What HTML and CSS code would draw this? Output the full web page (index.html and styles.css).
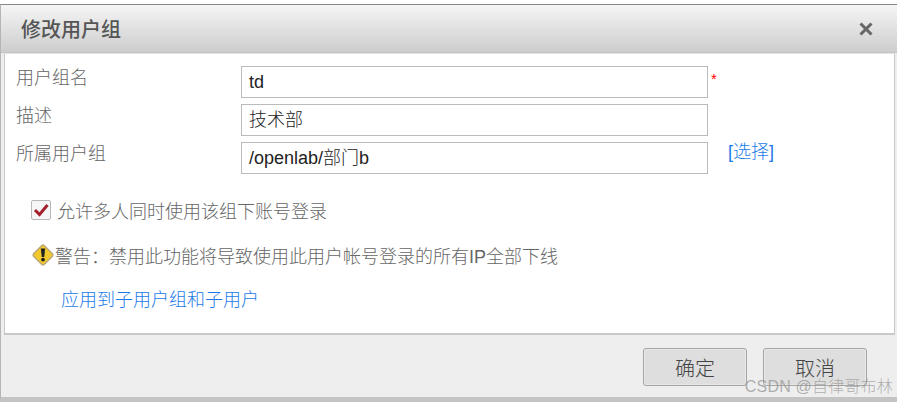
FILE: index.html
```html
<!DOCTYPE html>
<html lang="zh">
<head>
<meta charset="utf-8">
<title>修改用户组</title>
<link rel="stylesheet" href="styles.css">
</head>
<body>
<div class="dialog">
  <header class="titlebar">
    <h1 class="title">修改用户组</h1>
    <svg class="close" width="14" height="14" viewBox="0 0 14 14"><path d="M1.5 1.5L12.5 12.5M12.5 1.5L1.5 12.5" stroke="#666" stroke-width="3"/></svg>
  </header>
  <main class="content">
    <div class="form">
      <label class="label">用户组名</label>
      <div class="field"><div class="input">td</div><span class="req">*</span></div>
      <label class="label">描述</label>
      <div class="field"><div class="input">技术部</div></div>
      <label class="label">所属用户组</label>
      <div class="field"><div class="input">/openlab/部门b</div><a class="link pick">[选择]</a></div>
    </div>
    <div class="option">
      <span class="check"><svg width="16" height="14" viewBox="0 0 16 14"><path d="M2 7L6.5 11.5L14.5 2" fill="none" stroke="#a3202c" stroke-width="3"/></svg></span>
      <span class="text">允许多人同时使用该组下账号登录</span>
    </div>
    <div class="warning">
      <svg class="warn" width="22" height="22" viewBox="0 0 22 22">
        <rect x="3.5" y="3.5" width="15" height="15" rx="2" transform="rotate(45 11 11)" fill="#f2c92c" stroke="#b9a77a" stroke-width="1.4"/>
        <path d="M8.8 4.5h4.4l-1 8.5h-2.4z" fill="#222"/>
        <circle cx="11" cy="15.6" r="1.9" fill="#222"/>
      </svg>
      <span class="text">警告：禁用此功能将导致使用此用户帐号登录的所有IP全部下线</span>
    </div>
    <a class="link apply">应用到子用户组和子用户</a>
  </main>
  <footer class="footer">
    <button class="btn">确定</button>
    <button class="btn">取消</button>
  </footer>
  <span class="watermark">CSDN @自律哥布林</span>
</div>
</body>
</html>
```
FILE: styles.css
```css
* { box-sizing: border-box; }
html, body { margin: 0; padding: 0; }
body {
  width: 897px;
  height: 402px;
  overflow: hidden;
  background: #fff;
  font-family: "Liberation Sans", "Noto Sans CJK SC", sans-serif;
  font-size: 18px;
  font-weight: 300;
}
.dialog {
  position: relative;
  margin-top: 4px;
  height: 398px;
  display: flex;
  flex-direction: column;
  background: #eee;
  border-top: 1px solid #858585;
  border-left: 1px solid #b5b5b5;
  border-bottom: 5px solid #c4c4c4;
}
.titlebar {
  height: 48px;
  flex: none;
  display: flex;
  align-items: center;
  justify-content: space-between;
  padding: 0 24px 0 20px;
  background: linear-gradient(#f5f5f5, #cdcdcd);
  border-bottom: 1px solid #c4c4c4;
}
.title {
  margin: 0;
  font-size: 20px;
  font-weight: 500;
  color: #555;
}
.content {
  height: 282px;
  flex: none;
  margin: 0 2px 0 3px;
  padding: 12px 0 0 11px;
  background: #fff;
  border: 1px solid #c8c8c8;
  border-top: 1px solid #e4e4e4;
  border-bottom: 2px solid #c8c8c8;
  color: #666;
}
.form {
  display: grid;
  grid-template-columns: 225px 1fr;
  grid-auto-rows: 32px;
  row-gap: 6px;
}
.label { line-height: 24px; color: #666; }
.field { display: flex; align-items: flex-start; }
.input {
  width: 467px;
  height: 32px;
  padding: 0 7px;
  line-height: 30px;
  border: 1px solid #bbb;
  color: #222;
  background: #fff;
}
.req { margin: 4px 0 0 3px; color: #f00; font-size: 15px; line-height: 18px; }
.link { color: #1a7be8; }
.pick { margin-left: 20px; line-height: 20px; margin-top: 0; }
.option {
  display: flex;
  align-items: center;
  margin: 24px 0 0 15px;
  height: 24px;
}
.check {
  width: 20px;
  height: 20px;
  margin-right: 6px;
  display: flex;
  align-items: center;
  justify-content: center;
  border: 1px solid #b8b8b8;
  border-radius: 2px;
  background: #f6f6f6;
}
.warning {
  display: flex;
  align-items: center;
  margin: 21px 0 0 16px;
  height: 24px;
}
.warn { flex: none; margin-right: 1px; }
.apply { display: block; margin: 21px 0 0 45px; line-height: 24px; }
.footer {
  flex: 1;
  display: flex;
  justify-content: flex-end;
  align-items: flex-start;
  gap: 16px;
  padding: 13px 30px 0 0;
}
.btn {
  width: 104px;
  height: 38px;
  padding: 0;
  background: #dedede;
  border: 1px solid #a5a5a5;
  border-radius: 3px;
  box-shadow: inset 0 0 0 1px #e8e8e8;
  font: inherit;
  font-size: 20px;
  color: #444;
}
.watermark {
  position: absolute;
  right: 4px;
  bottom: 0;
  line-height: 20px;
  font-size: 16px;
  letter-spacing: .2px;
  color: rgba(150, 150, 150, .75);
}
```
